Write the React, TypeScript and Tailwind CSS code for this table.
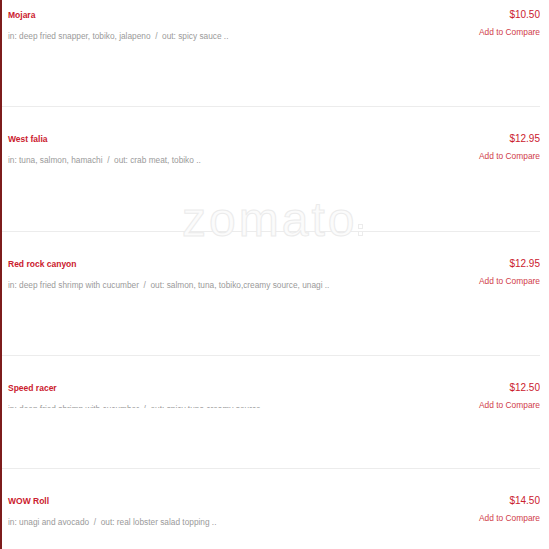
import React from "react";

type Item = { name: string; desc: string; price: string; h: string; clip?: boolean };

const items: Item[] = [
  { name: "Mojara", desc: "in: deep fried snapper, tobiko, jalapeno  /  out: spicy sauce ..", price: "$10.50", h: "h-[124px]" },
  { name: "West falia", desc: "in: tuna, salmon, hamachi  /  out: crab meat, tobiko ..", price: "$12.95", h: "h-[125px]" },
  { name: "Red rock canyon", desc: "in: deep fried shrimp with cucumber  /  out: salmon, tuna, tobiko,creamy source, unagi ..", price: "$12.95", h: "h-[124px]" },
  { name: "Speed racer", desc: "in: deep fried shrimp with cucumber  /  out: spicy tuna,creamy source ..", price: "$12.50", h: "h-[113px]", clip: true },
  { name: "WOW Roll", desc: "in: unagi and avocado  /  out: real lobster salad topping ..", price: "$14.50", h: "h-[124px]" },
];

function Row({ item }: { item: Item }) {
  return (
    <div className={`${item.h} border-b border-[#ececec] flex justify-between pl-[6px] pt-[27px] overflow-hidden`}>
      <div className="flex flex-col">
        <div className="text-[8.5px] leading-[10px] font-bold text-[#cb202d]">{item.name}</div>
        {item.clip ? (
          <div className="mt-[11px] h-[4px] overflow-hidden">
            <div className="text-[8.3px] leading-[10px] text-[#9a9a9a] whitespace-pre">{item.desc}</div>
          </div>
        ) : (
          <div className="mt-[11px] text-[8.3px] leading-[10px] text-[#9a9a9a] whitespace-pre">{item.desc}</div>
        )}
      </div>
      <div className="flex flex-col items-end">
        <div className="text-[10px] leading-[10px] text-[#cb202d]">{item.price}</div>
        <div className="mt-[7px] text-[8.4px] leading-[10px] text-[#d0404a]">Add to Compare</div>
      </div>
    </div>
  );
}

export default function App() {
  return (
    <div className="relative w-[549px] h-[549px] bg-white overflow-hidden font-['Liberation_Sans',Arial,sans-serif]">
      <div className="w-[540px] h-[549px] border-l-2 border-[#7d1c1c] overflow-hidden">
        <div className="-mt-[17px]">
          {items.map((it) => (
            <Row key={it.name} item={it} />
          ))}
        </div>
      </div>
      <div className="absolute left-[182px] top-[196px] flex items-end pointer-events-none">
        <span className="text-[48px] leading-[48px] tracking-[3px] text-[#fbfbfb] [-webkit-text-stroke:1px_#ebebeb]">zomato</span>
        <span className="ml-[1px] mb-[8px] flex flex-col gap-[2px]">
          <span className="block w-[5px] h-[5px] border border-[#ececec]"></span>
          <span className="block w-[5px] h-[5px] border border-[#ececec]"></span>
        </span>
      </div>
    </div>
  );
}
